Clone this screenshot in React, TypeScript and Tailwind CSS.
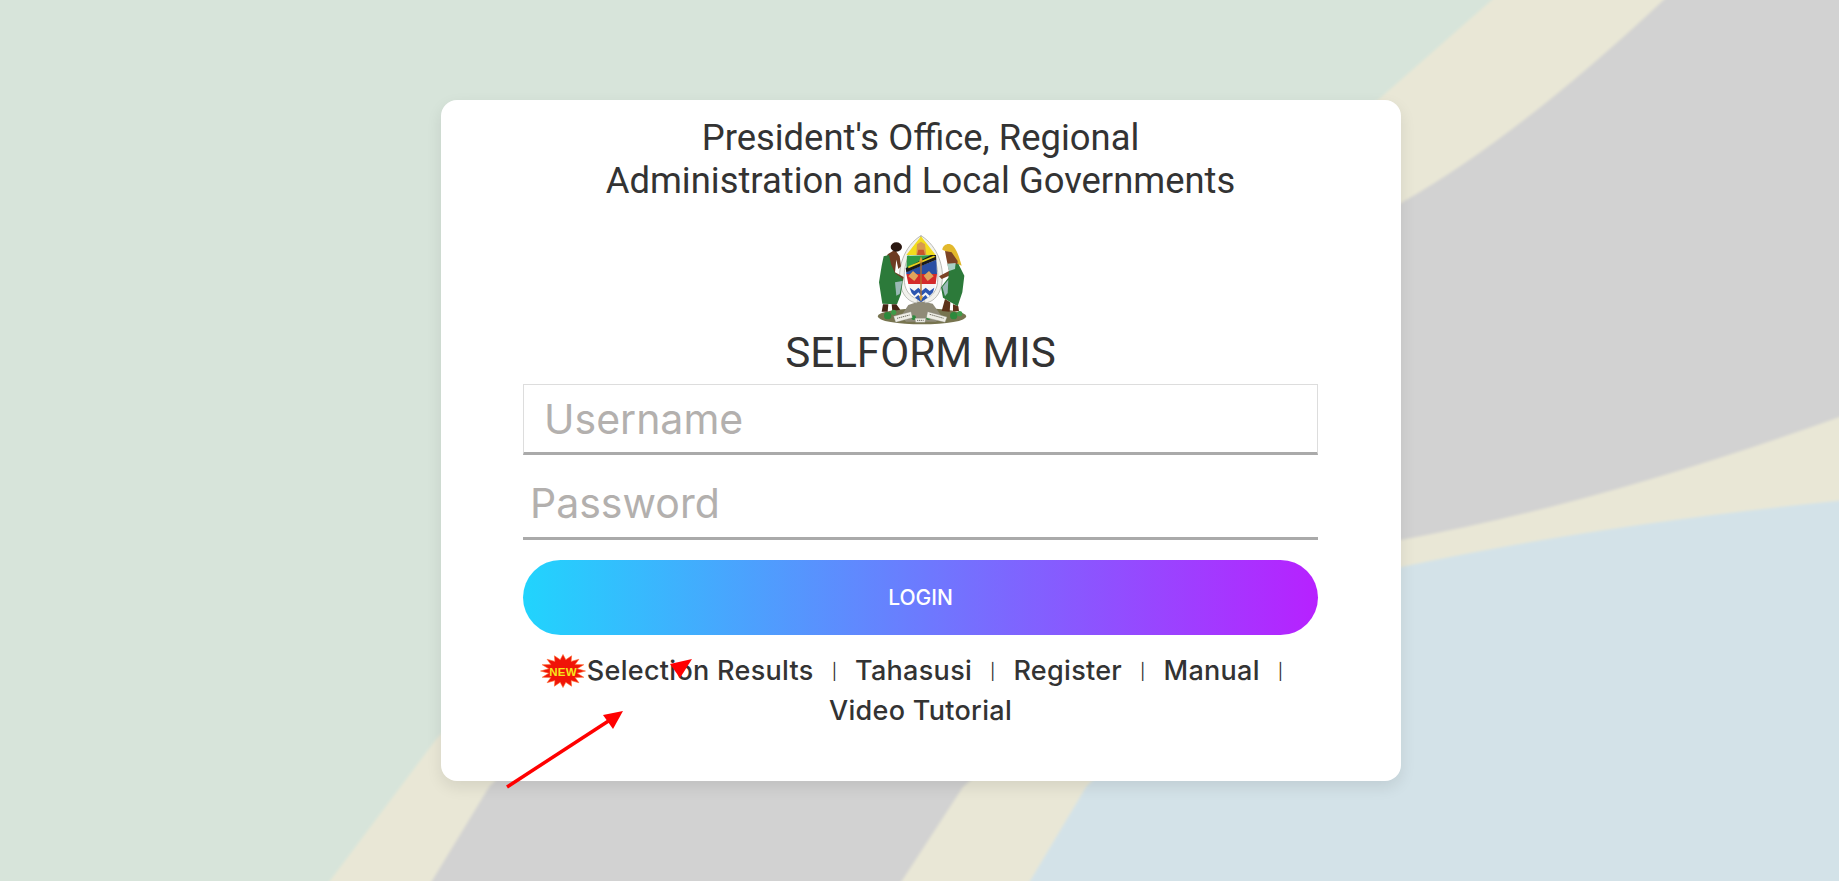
import { useMemo } from "react";

const poppinsLike = "font-['Inter','Noto_Sans',sans-serif]";

function FlagBackground() {
  return (
    <svg className="absolute inset-0 h-full w-full" viewBox="0 0 1839 881" preserveAspectRatio="none">
      <defs>
        <filter id="soft" filterUnits="userSpaceOnUse" x="-100" y="-100" width="2100" height="1100">
          <feGaussianBlur stdDeviation="1.6" />
        </filter>
      </defs>
      <g filter="url(#soft)">
        <rect x="-50" y="-50" width="1950" height="1000" fill="#d7e4da" />
        {/* blue lower right */}
        <path d="M 1900 480 L 1900 950 L 980 950 L 1086 787 Q 1230 640 1401 567 Q 1620 520 1900 490 Z" fill="#d3e2e8" />
        {/* yellow stripe */}
        <path d="M 1526 -30 L 1900 -30 L 1900 495 Q 1620 520 1401 567 Q 1230 640 1086 787 L 989 950 L 278 950 L 438 737 Q 800 420 1378 100 Z" fill="#e9e7d6" />
        {/* gray stripe */}
        <path d="M 1695 -30 L 1900 -30 L 1900 395 Q 1620 500 1401 540 Q 1130 640 963 787 L 857 950 L 390 950 L 489 787 Q 800 470 1401 203 Q 1530 130 1695 -30 Z" fill="#d2d2d2" />
      </g>
    </svg>
  );
}

function Emblem() {
  return (
    <svg width="200" height="120" viewBox="0 0 600 360" className="block">
      {/* ground */}
      <ellipse cx="303" cy="292" rx="133" ry="24" fill="#77744f" />
      <path d="M240 292 L262 258 L298 246 L335 254 L362 292 L345 308 L255 308 Z" fill="#8f8b78" />
      {/* tusks */}
      <path d="M300 50 C 250 80 225 150 240 205 C 248 235 268 250 288 252 L 290 240 C 272 235 258 222 252 200 C 242 150 262 90 300 62 Z" fill="#f1f1ec" stroke="#9c9c95" strokeWidth="2" />
      <path d="M300 50 C 350 80 375 150 360 205 C 352 235 332 250 312 252 L 310 240 C 328 235 342 222 348 200 C 358 150 338 90 300 62 Z" fill="#f1f1ec" stroke="#9c9c95" strokeWidth="2" />
      {/* shield */}
      <path d="M300 52 L344 108 L256 108 Z" fill="#f2dc1e" />
      <path d="M258 110 L344 108 L330 118 L256 150 Z" fill="#2f9a45" />
      <path d="M346 122 L348 165 L256 165 L256 158 Z" fill="#2b4fa3" />
      <path d="M254 148 L330 108 L345 108 L346 122 L256 160 Z" fill="#1b1b1b" />
      <path d="M262 142 L338 110 L344 113 L262 148 Z" fill="#e8d21e" />
      <path d="M256 165 L348 165 L344 195 L262 195 Z" fill="#d42a2a" />
      <path d="M262 195 L344 195 C 340 222 320 240 300 250 C 280 240 266 222 262 195 Z" fill="#f5f5f5" />
      <path d="M266 206 L280 216 L292 206 L302 216 L314 206 L326 216 L340 206 L336 220 L326 230 L314 220 L302 230 L292 220 L280 230 L272 222 Z" fill="#2c55b0" />
      <path d="M282 236 L292 228 L302 238 L314 228 L320 236 L300 250 Z" fill="#2c55b0" />
      <path d="M288 76 L300 68 L312 76 L316 108 L286 108 Z" fill="#d89a4c" />
      <path d="M292 92 L308 92 L312 108 L288 108 Z" fill="#c8552c" />
      {/* spear and hoe */}
      <path d="M300 120 L300 240" stroke="#b5722c" strokeWidth="4" />
      <path d="M300 112 L294 128 L306 128 Z M294 232 L306 232 L300 248 Z" fill="#d8a032" />
      <path d="M262 172 L276 156 L292 170 L280 186 Z" fill="#e0a45c" />
      <path d="M338 172 L324 156 L308 170 L320 186 Z" fill="#e0a45c" />
      {/* man */}
      <path d="M200 106 L222 92 L236 112 L240 142 L232 150 L226 122 L222 160 L248 174 L246 186 L214 172 L192 128 Z" fill="#6d3b22" />
      <ellipse cx="226" cy="84" rx="17" ry="14" fill="#2a1710" />
      <path d="M188 112 L204 108 L210 136 L222 162 L246 180 L240 225 L228 256 L184 254 L174 190 L182 140 Z" fill="#2c7a3a" />
      <path d="M222 190 L244 186 L236 225 L226 230 Z" fill="#9ab9b6" />
      <path d="M186 256 L202 256 L200 278 L182 278 Z M212 256 L226 256 L238 272 L214 276 Z" fill="#452415" />
      {/* woman */}
      <path d="M364 92 C 366 76 384 70 396 80 C 410 96 416 120 422 140 L 408 134 C 398 110 384 100 364 92 Z" fill="#e2b82c" />
      <path d="M372 96 L392 100 L410 126 L408 160 L362 180 L354 172 L384 156 L376 118 Z" fill="#7c4426" />
      <path d="M386 140 L412 134 L430 170 L424 220 L410 262 L366 236 L360 205 L382 176 Z" fill="#2c7a3a" />
      <path d="M378 134 L404 132 L402 150 L384 156 Z" fill="#a9cfc4" />
      <path d="M364 204 L382 182 L380 222 L372 232 Z" fill="#9ab9b6" />
      <path d="M372 240 L388 250 L386 278 L362 276 Z M396 256 L412 262 L414 276 L396 276 Z" fill="#5d3219" />
      {/* foliage */}
      <circle cx="200" cy="290" r="11" fill="#2c8a3c" />
      <circle cx="218" cy="280" r="8" fill="#3f9b48" />
      <circle cx="398" cy="290" r="11" fill="#2c8a3c" />
      <circle cx="416" cy="284" r="8" fill="#3f9b48" />
      <circle cx="278" cy="296" r="7" fill="#2c8a3c" />
      <circle cx="322" cy="296" r="7" fill="#2c8a3c" />
      {/* ribbon */}
      <path d="M218 292 L270 278 L274 296 L224 310 Z" fill="#efeee6" stroke="#8a8a80" />
      <path d="M320 278 L378 294 L372 310 L316 296 Z" fill="#efeee6" stroke="#8a8a80" />
      <path d="M282 298 L314 298 L312 310 L284 310 Z" fill="#efeee6" stroke="#8a8a80" />
      <path d="M228 298 L266 288 M326 286 L368 298 M288 304 L308 304" stroke="#6c6c60" strokeWidth="3" strokeDasharray="4 2" />
    </svg>
  );
}

function NewBurst() {
  const points = useMemo(() => {
    const spikes = 16;
    const pts: string[] = [];
    for (let i = 0; i < spikes * 2; i++) {
      const a = (i * Math.PI) / spikes;
      const rx = i % 2 === 0 ? 22.5 : 14.5;
      const ry = i % 2 === 0 ? 16.5 : 11.5;
      pts.push(`${(23 + rx * Math.cos(a)).toFixed(1)},${(17 + ry * Math.sin(a)).toFixed(1)}`);
    }
    return pts.join(" ");
  }, []);

  return (
    <svg width="46" height="34" viewBox="0 0 46 34" className="block shrink-0">
      <polygon points={points} fill="#f01408" stroke="#ff6a2a" strokeWidth="0.6" />
      <text x="23" y="21.5" textAnchor="middle" fontSize="11.5" fontWeight="700" fill="#f6e71c" fontFamily="Liberation Sans, sans-serif">
        NEW
      </text>
    </svg>
  );
}

function Sep() {
  return <span className="mx-[18px] text-[16px] font-normal leading-none tracking-normal text-[#333]">|</span>;
}

export default function App() {
  return (
    <div className="relative h-[881px] w-full overflow-hidden bg-[#d7e4da]">
      <FlagBackground />
      <div className="relative flex justify-center pl-[3px] pt-[100px]">
        <div className="relative flex h-[681px] w-[960px] flex-col items-center rounded-[16px] bg-white pl-[82px] pr-[83px] shadow-[0_6px_16px_rgba(0,0,0,0.09)]">
          <h1 className="mt-[16px] text-center font-['Roboto',sans-serif] text-[36.4px] font-normal leading-[43px] text-[#333]">
            President's Office, Regional
            <br />
            Administration and Local Governments
          </h1>
          <div className="mt-[17px]">
            <Emblem />
          </div>
          <div className="mt-[-9px] font-['Roboto',sans-serif] text-[42.2px] leading-[46px] text-[#333]">SELFORM MIS</div>

          <form className="mt-[8px] flex w-full flex-col">
            <input
              type="text"
              placeholder="Username"
              className={`h-[71px] w-full border border-b-[3px] border-[#ddd] border-b-[#aaa] bg-white pl-[20px] text-[41px] font-normal outline-none placeholder:text-[#b3b0ae] ${poppinsLike}`}
            />
            <input
              type="password"
              placeholder="Password"
              className={`mt-[14px] h-[71px] w-full border-b-[3px] border-[#aaa] bg-white pl-[7px] text-[41px] font-normal outline-none placeholder:text-[#b3b0ae] ${poppinsLike}`}
            />
            <button
              type="button"
              className={`mt-[20px] h-[75px] w-full rounded-full bg-[linear-gradient(90deg,#21d4fd,#b721ff)] text-[21px] font-medium text-white ${poppinsLike}`}
            >
              LOGIN
            </button>
          </form>

          <div className={`mt-[16px] flex w-full flex-wrap items-center justify-center text-[27px] font-medium leading-[40px] tracking-[0.3px] text-[#333] ${poppinsLike}`}>
            <NewBurst />
            <a className="ml-[1px]">Selection Results</a>
            <Sep />
            <a>Tahasusi</a>
            <Sep />
            <a>Register</a>
            <Sep />
            <a>Manual</a>
            <Sep />
            <a className="basis-full text-center">Video Tutorial</a>
          </div>

          {/* red annotation arrows */}
          <svg className="pointer-events-none absolute left-0 top-0 overflow-visible" width="960" height="681" viewBox="441 100 960 681">
            <path d="M507 787 L610 720" stroke="#ff0000" strokeWidth="3.5" fill="none" />
            <path d="M623 711 L603 715 L613 729 Z" fill="#ff0000" />
            <path d="M692 659 L670 664 L680 678 Z" fill="#ff0000" />
          </svg>
        </div>
      </div>
    </div>
  );
}
